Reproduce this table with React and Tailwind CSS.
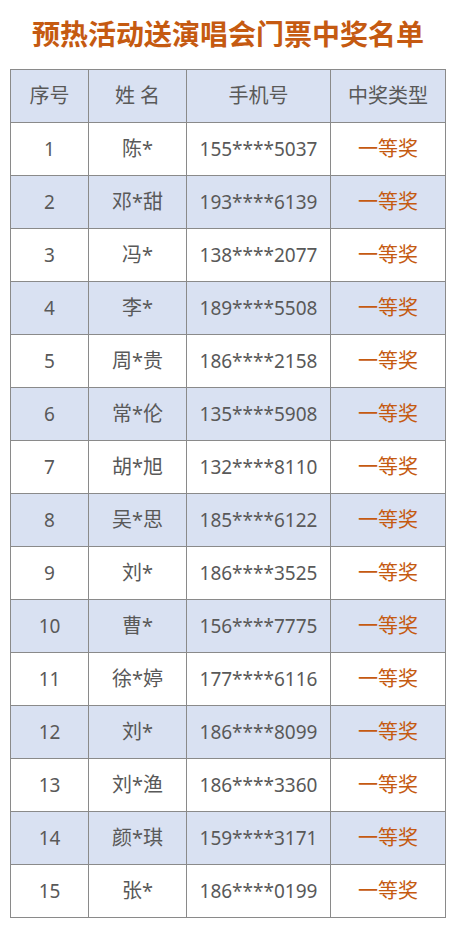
import React from 'react'

const rows = [
  ['1', '陈*', '155****5037'],
  ['2', '邓*甜', '193****6139'],
  ['3', '冯*', '138****2077'],
  ['4', '李*', '189****5508'],
  ['5', '周*贵', '186****2158'],
  ['6', '常*伦', '135****5908'],
  ['7', '胡*旭', '132****8110'],
  ['8', '吴*思', '185****6122'],
  ['9', '刘*', '186****3525'],
  ['10', '曹*', '156****7775'],
  ['11', '徐*婷', '177****6116'],
  ['12', '刘*', '186****8099'],
  ['13', '刘*渔', '186****3360'],
  ['14', '颜*琪', '159****3171'],
  ['15', '张*', '186****0199'],
]

const App = () => {
  return (
    <div className='w-[456px] min-h-[931px] bg-white' style={{ fontFamily: '"Noto Sans", "Noto Sans CJK SC", sans-serif' }}>
      <h1 className='h-[69px] flex items-center justify-center text-[28px] font-bold text-[#c55a11] pb-1'
        style={{ fontFamily: '"Noto Sans CJK SC", serif' }}>
        预热活动送演唱会门票中奖名单
      </h1>
      <table className='ml-[10px] w-[436px] border-collapse table-fixed text-[20px] text-[#595959]'>
        <colgroup>
          <col className='w-[78px]' />
          <col className='w-[98px]' />
          <col className='w-[144px]' />
          <col className='w-[115px]' />
        </colgroup>
        <thead>
          <tr className='h-[53px] bg-[#d9e1f2]'>
            <th className='border border-[#8a8a8a] font-normal'>序号</th>
            <th className='border border-[#8a8a8a] font-normal'>姓 名</th>
            <th className='border border-[#8a8a8a] font-normal'>手机号</th>
            <th className='border border-[#8a8a8a] font-normal'>中奖类型</th>
          </tr>
        </thead>
        <tbody>
          {rows.map((r, i) => (
            <tr key={r[0]} className={i % 2 === 1 ? 'h-[53px] bg-[#d9e1f2]' : 'h-[53px] bg-white'}>
              <td className='border border-[#8a8a8a] text-center text-[19px]'>{r[0]}</td>
              <td className='border border-[#8a8a8a] text-center'>{r[1]}</td>
              <td className='border border-[#8a8a8a] text-center text-[19px]'>{r[2]}</td>
              <td className='border border-[#8a8a8a] text-center text-[#c55a11]'>一等奖</td>
            </tr>
          ))}
        </tbody>
      </table>
    </div>
  )
}

export default App
